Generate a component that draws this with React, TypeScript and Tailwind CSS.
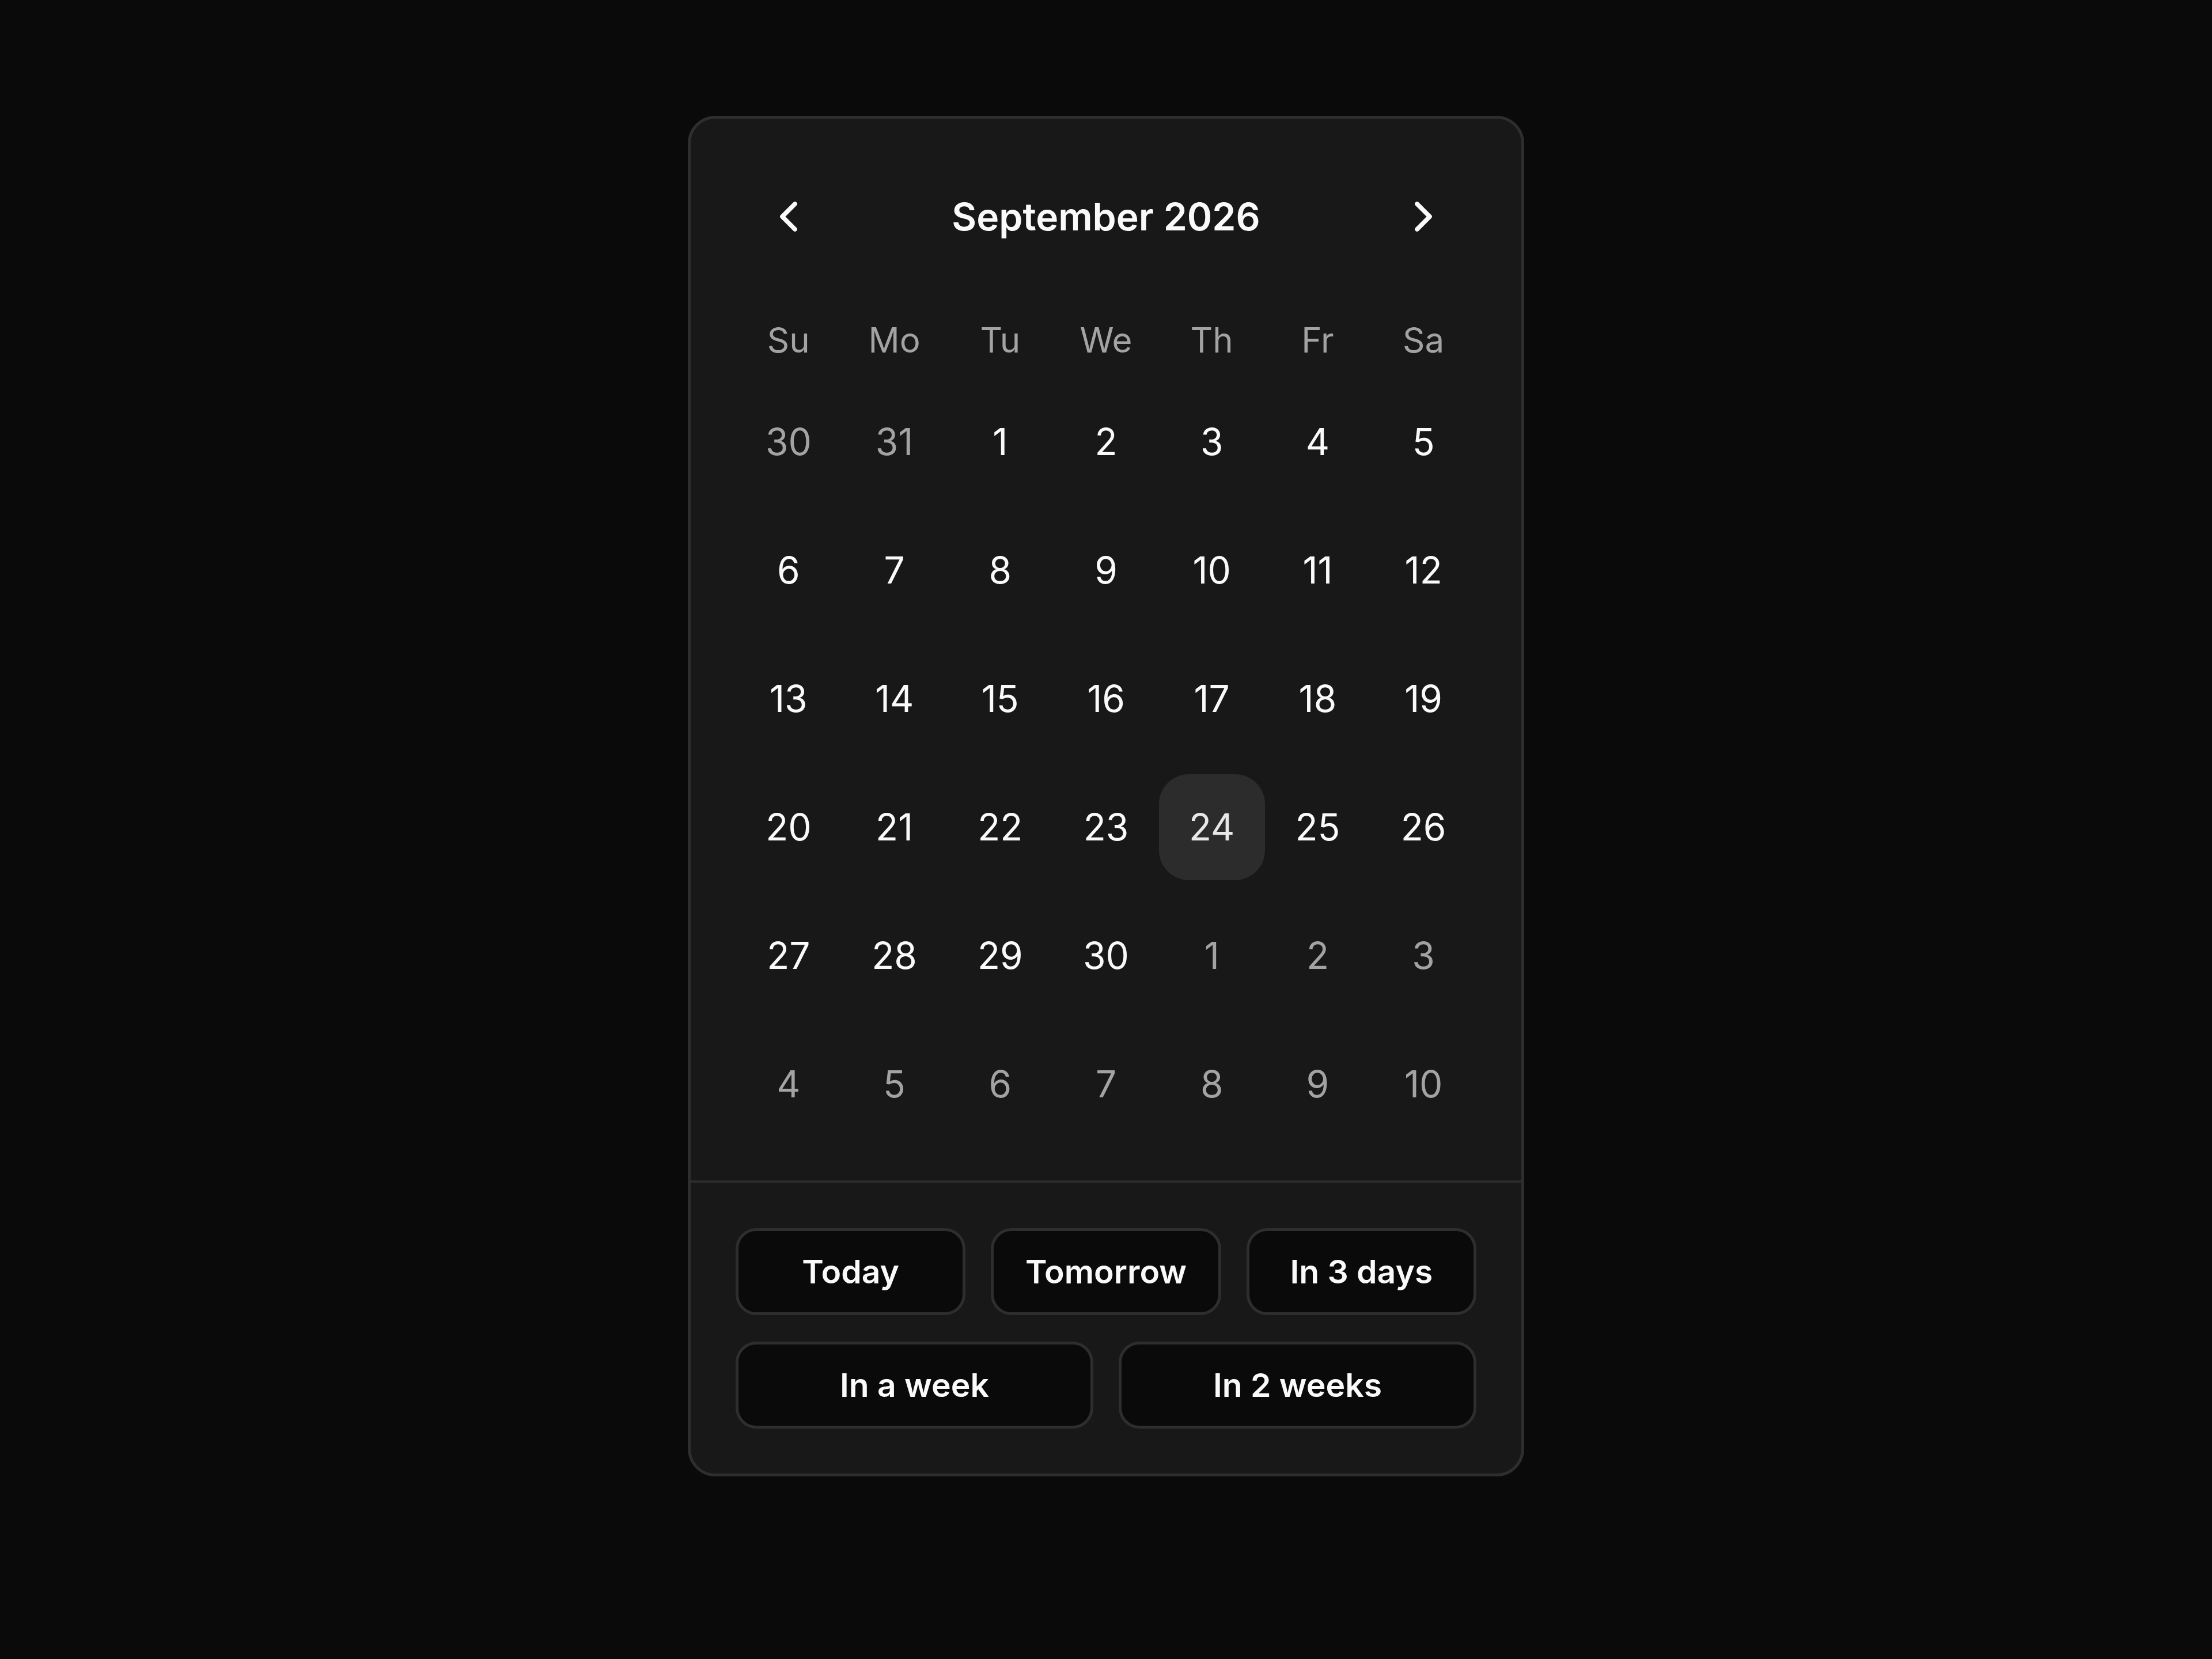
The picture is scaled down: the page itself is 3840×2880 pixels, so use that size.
import { ChevronLeft, ChevronRight } from "lucide-react";

type Day = { n: number; muted?: boolean; selected?: boolean };

const weekdays = ["Su", "Mo", "Tu", "We", "Th", "Fr", "Sa"];

// september 2026 starts on a tuesday
const buildDays = (): Day[] => {
  const days: Day[] = [{ n: 30, muted: true }, { n: 31, muted: true }];
  for (let i = 1; i <= 30; i++) days.push({ n: i, selected: i === 24 });
  let next = 1;
  while (days.length < 42) days.push({ n: next++, muted: true });
  return days;
};

const QuickButton = ({ label }: { label: string }) => (
  <button className="h-[151px] rounded-[36px] border-[5px] border-[#2e2e2e] bg-[#0a0a0a] text-[57px] font-semibold text-[#fafafa]">
    {label}
  </button>
);

export default function App() {
  const days = buildDays();

  return (
    <div
      className="flex min-h-[2880px] w-full justify-center bg-[#0a0a0a] pt-[201px]"
      style={{ fontFamily: "Inter, 'Noto Sans', sans-serif" }}
    >
      <div className="h-fit w-[1452px] rounded-[48px] border-[5px] border-[#2e2e2e] bg-[#181818]">
        {/* Calendar */}
        <div className="px-[78px] pt-[78px] pb-[75px]">
          <div className="flex h-[184px] items-center justify-between">
            <button className="flex h-[184px] w-[184px] items-center justify-center text-[#fafafa]">
              <ChevronLeft size={88} strokeWidth={2.1} />
            </button>
            <div className="text-[66px] font-semibold text-[#fafafa]">September 2026</div>
            <button className="flex h-[184px] w-[184px] items-center justify-center text-[#fafafa]">
              <ChevronRight size={88} strokeWidth={2.1} />
            </button>
          </div>

          <div className="mt-[76px] grid h-[92px] grid-cols-7 items-center">
            {weekdays.map((d) => (
              <div key={d} className="text-center text-[60px] text-[#a3a3a3]">
                {d}
              </div>
            ))}
          </div>

          <div className="mt-[39px] grid grid-cols-7 gap-y-[39px]">
            {days.map((d, i) => (
              <div key={i} className="flex justify-center">
                <div
                  className={
                    d.selected
                      ? "flex h-[184px] w-[184px] items-center justify-center rounded-[52px] bg-[#2c2c2c] text-[64px] text-[#e8e8e8]"
                      : d.muted
                        ? "flex h-[184px] w-[184px] items-center justify-center text-[64px] text-[#a3a3a3]"
                        : "flex h-[184px] w-[184px] items-center justify-center text-[64px] text-[#fafafa]"
                  }
                >
                  {d.n}
                </div>
              </div>
            ))}
          </div>
        </div>

        {/* Quick picks */}
        <div className="flex flex-col gap-[46px] border-t-[5px] border-[#2a2a2a] p-[78px]">
          <div className="grid grid-cols-3 gap-[44px]">
            <QuickButton label="Today" />
            <QuickButton label="Tomorrow" />
            <QuickButton label="In 3 days" />
          </div>
          <div className="grid grid-cols-2 gap-[44px]">
            <QuickButton label="In a week" />
            <QuickButton label="In 2 weeks" />
          </div>
        </div>
      </div>
    </div>
  );
}
